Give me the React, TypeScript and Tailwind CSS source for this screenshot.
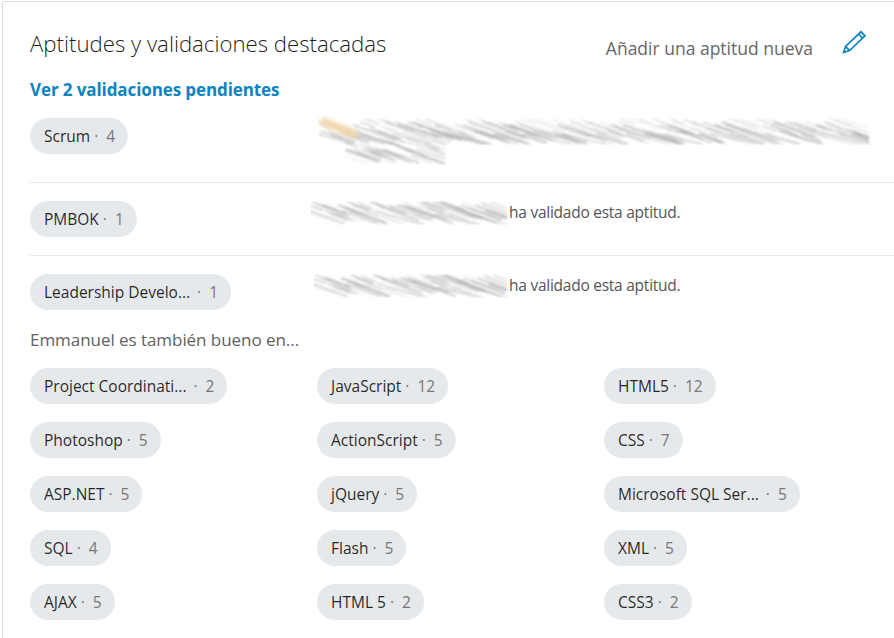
const FONT = "font-['Open_Sans','Noto_Sans',sans-serif]";

const OTHER_SKILLS = [
  { name: "Project Coordinati...", count: 2 },
  { name: "JavaScript", count: 12 },
  { name: "HTML5", count: 12 },
  { name: "Photoshop", count: 5 },
  { name: "ActionScript", count: 5 },
  { name: "CSS", count: 7 },
  { name: "ASP.NET", count: 5 },
  { name: "jQuery", count: 5 },
  { name: "Microsoft SQL Ser...", count: 5 },
  { name: "SQL", count: 4 },
  { name: "Flash", count: 5 },
  { name: "XML", count: 5 },
  { name: "AJAX", count: 5 },
  { name: "HTML 5", count: 2 },
  { name: "CSS3", count: 2 },
];

function SkillPill({ name, count }: { name: string; count: number }) {
  const cut = name.endsWith("...");
  return (
    <div className="flex h-9 w-fit items-center whitespace-nowrap rounded-full bg-[#e6e9ec] pl-[14px] pr-[13px] pt-[2px] text-[15.5px]">
      <span className="text-[rgba(0,0,0,0.85)]">{name}</span>
      <span className={cut ? "ml-[7px] text-[#777]" : "ml-[4px] text-[#777]"}>·</span>
      <span className="ml-[8px] text-[#777]">{count}</span>
    </div>
  );
}

// the name is smudged out in the screenshot, so this is just diagonal blurred strokes
function Smudge({ width, height }: { width: number; height: number }) {
  const strokes = [];
  let n = 0;
  for (let x = -6; x < width - 14; x += 2.5) {
    n++;
    const seed = (n * 17 + (n * n) % 41) % 37;
    const len = 14 + seed * 0.9;
    const y = 1 + ((seed * 3) % Math.max(1, height - 9));
    const grey = 150 + ((seed * 7) % 70);
    const dx = Math.min(len, width - x - 2);
    strokes.push(
      <line
        key={n}
        x1={x}
        y1={y}
        x2={x + dx}
        y2={Math.min(y + dx * 0.36, height - 1)}
        stroke={`rgb(${grey},${grey},${grey})`}
        strokeWidth={1 + (seed % 3) * 0.6}
        opacity={0.45}
      />
    );
  }
  const id = `blur-${width}-${height}`;
  return (
    <svg width={width} height={height} className="block shrink-0">
      <defs>
        <filter id={id}>
          <feGaussianBlur stdDeviation="0.8" />
        </filter>
      </defs>
      <g filter={`url(#${id})`}>{strokes}</g>
    </svg>
  );
}

function LongSmudge() {
  return (
    <div className="relative h-[47px] w-[552px]">
      <Smudge width={552} height={27} />
      <div className="ml-[26px] mt-[-8px]">
        <Smudge width={102} height={28} />
      </div>
      <div className="absolute left-0 top-[6px] h-[8px] w-[40px] rotate-[22deg] rounded-full bg-[#f3d9ac] blur-[2px]" />
    </div>
  );
}

function EditIcon() {
  return (
    <svg width="24" height="24" viewBox="0 0 24 24" fill="none" stroke="#0a84c1" strokeWidth="1.7" strokeLinejoin="miter">
      <path d="M1.6 22.4 L3.6 16.4 L18.9 1.8 L23 5.8 L7.6 20.6 Z" />
      <path d="M16.5 4.2 L20.6 8.2" />
      <path d="M3.6 16.4 L7.6 20.6" />
    </svg>
  );
}

export default function App() {
  return (
    <div className={`${FONT} h-[638px] w-[894px] overflow-hidden bg-white pl-[2px] pt-[1px]`}>
      <div className="h-[700px] rounded-tl-[2px] border-l border-t border-[#d9d9d9] pl-[27px] pt-[27px]">
        {/* Header */}
        <div className="flex h-[30px] items-center justify-between pr-[28px]">
          <h2 className="text-[22.2px] font-light text-[rgba(0,0,0,0.9)]">
            Aptitudes y validaciones destacadas
          </h2>
          <div className="flex items-center">
            <span className="mt-[8px] text-[17.5px] font-medium text-[#666]">Añadir una aptitud nueva</span>
            <button className="ml-[29px] mt-[-4px]">
              <EditIcon />
            </button>
          </div>
        </div>

        <a className="mt-[21px] block text-[17px] font-bold leading-[20px] tracking-[-0.1px] text-[#0a84c1]">
          Ver 2 validaciones pendientes
        </a>

        {/* Top skills */}
        <div className="mt-[18px] grid grid-cols-[287px_1fr] border-b border-[#e6e9ec] pb-[28px]">
          <SkillPill name="Scrum" count={4} />
          <div className="ml-[2px] h-[36px]">
            <LongSmudge />
          </div>
        </div>

        <div className="grid grid-cols-[287px_1fr] border-b border-[#e6e9ec] pb-[18px] pt-[18px]">
          <SkillPill name="PMBOK" count={1} />
          <div className="ml-[-6px] flex h-[24px] items-center">
            <Smudge width={198} height={24} />
            <span className="whitespace-nowrap text-[15.5px] tracking-[-0.25px] text-[#555]">ha validado esta aptitud.</span>
          </div>
        </div>

        <div className="grid grid-cols-[287px_1fr] pt-[18px]">
          <SkillPill name="Leadership Develo..." count={1} />
          <div className="ml-[-3px] flex h-[24px] items-center">
            <Smudge width={195} height={24} />
            <span className="whitespace-nowrap text-[15.5px] tracking-[-0.25px] text-[#555]">ha validado esta aptitud.</span>
          </div>
        </div>

        {/* Other skills */}
        <p className="mt-[18px] text-[17px] leading-[24px] tracking-[-0.05px] text-[#5f5f5f]">Emmanuel es también bueno en...</p>

        <div className="mt-[16px] grid grid-cols-[287px_287px_1fr] gap-y-[18px]">
          {OTHER_SKILLS.map((s) => (
            <SkillPill key={s.name} name={s.name} count={s.count} />
          ))}
        </div>
      </div>
    </div>
  );
}
